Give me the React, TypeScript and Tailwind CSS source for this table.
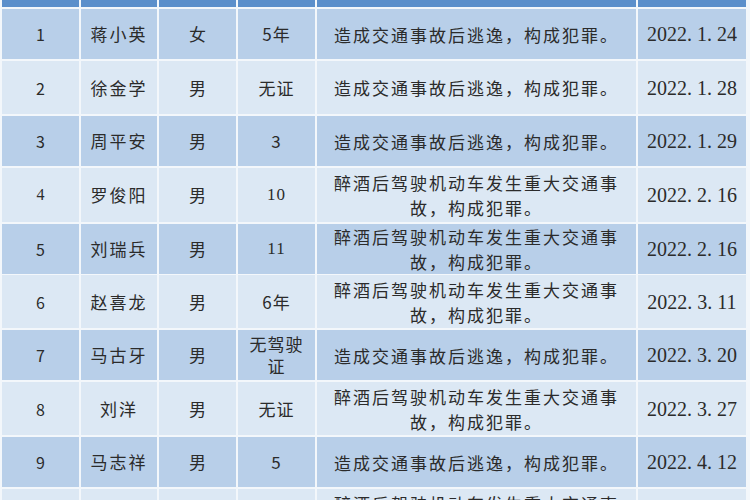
import React from "react";

type Row = {
  no: string;
  name: string;
  sex: string;
  age: string;
  act: string;
  date: string;
  h: string;
};

const HIT = "造成交通事故后逃逸，构成犯罪。";
const DRUNK = "醉酒后驾驶机动车发生重大交通事故，构成犯罪。";

const rows: Row[] = [
  { no: "1", name: "蒋小英", sex: "女", age: "5年", act: HIT, date: "2022. 1. 24", h: "h-[50px]" },
  { no: "2", name: "徐金学", sex: "男", age: "无证", act: HIT, date: "2022. 1. 28", h: "h-[53px]" },
  { no: "3", name: "周平安", sex: "男", age: "3", act: HIT, date: "2022. 1. 29", h: "h-[50px]" },
  { no: "4", name: "罗俊阳", sex: "男", age: "10", act: DRUNK, date: "2022. 2. 16", h: "h-[54px]" },
  { no: "5", name: "刘瑞兵", sex: "男", age: "11", act: DRUNK, date: "2022. 2. 16", h: "h-[49px]" },
  { no: "6", name: "赵喜龙", sex: "男", age: "6年", act: DRUNK, date: "2022. 3. 11", h: "h-[53px]" },
  { no: "7", name: "马古牙", sex: "男", age: "无驾驶证", act: HIT, date: "2022. 3. 20", h: "h-[50px]" },
  { no: "8", name: "刘洋", sex: "男", age: "无证", act: DRUNK, date: "2022. 3. 27", h: "h-[53px]" },
  { no: "9", name: "马志祥", sex: "男", age: "5", act: HIT, date: "2022. 4. 12", h: "h-[50px]" },
  // last row is cut by the bottom edge; only the top of its description shows
  { no: "", name: "", sex: "", age: "", act: DRUNK, date: "", h: "h-[54px]" },
];

const cjk = "font-['Noto_Sans_CJK_SC',sans-serif]";
const serif = "font-['Liberation_Serif','Noto_Sans_CJK_SC',serif]";
const cell = "flex items-center justify-center text-center";
const cols = "grid grid-cols-[77px_76px_77px_77px_319px_108px] gap-[2px]";

export default function App() {
  return (
    <div className="w-[750px] h-[500px] overflow-hidden bg-[#f3f7fb]">
      <div className="mt-[-29px] ml-[2px] w-[744px] flex flex-col gap-[2px] text-[#2b2b2b]">
        {/* header strip: only its bottom edge is in view */}
        <div className={`${cols} h-[36px]`}>
          {[0, 1, 2, 3, 4, 5].map((k) => (
            <div key={k} className="bg-[#5b8fcb]" />
          ))}
        </div>

        {rows.map((r, i) => {
          const bg = i % 2 === 0 ? "bg-[#b8cfe9]" : "bg-[#dce8f4]";
          return (
            <div key={i} className={`${cols} ${r.h}`}>
              <div className={`${cell} ${bg} ${r.no === "4" ? serif : cjk} text-[16px]`}>{r.no}</div>
              <div className={`${cell} ${bg} ${cjk} text-[17px] tracking-[2px]`}>{r.name}</div>
              <div className={`${cell} ${bg} ${cjk} text-[17px]`}>{r.sex}</div>
              <div
                className={`${cell} ${bg} ${r.age.length === 2 && /\d\d/.test(r.age) ? serif : cjk} text-[17px] leading-[22px] px-[8px] tracking-[1px]`}
              >
                {r.age}
              </div>
              <div className={`${cell} ${bg} ${cjk} text-[17px] leading-[25px] tracking-[2px] px-[12px]`}>
                {r.act}
              </div>
              <div className={`${cell} ${bg} ${serif} text-[20px] whitespace-pre`}>{r.date}</div>
            </div>
          );
        })}
      </div>
    </div>
  );
}
